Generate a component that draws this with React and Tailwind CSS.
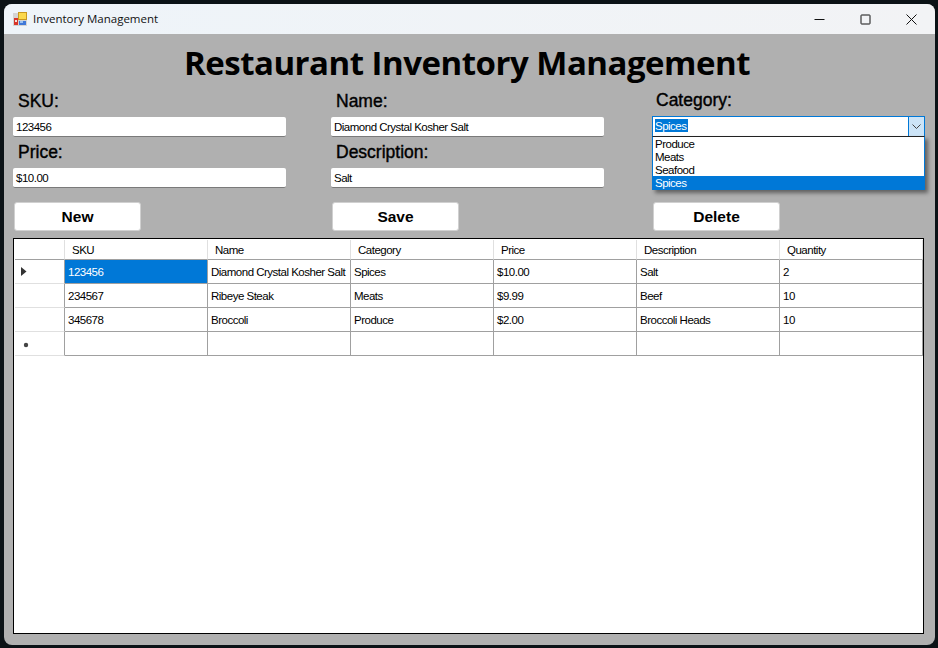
import React from 'react';

const sans = "font-['Liberation_Sans',Arial,sans-serif]";

const columns = ['SKU', 'Name', 'Category', 'Price', 'Description', 'Quantity'];

const rows = [
  ['123456', 'Diamond Crystal Kosher Salt', 'Spices', '$10.00', 'Salt', '2'],
  ['234567', 'Ribeye Steak', 'Meats', '$9.99', 'Beef', '10'],
  ['345678', 'Broccoli', 'Produce', '$2.00', 'Broccoli Heads', '10'],
  ['', '', '', '', '', ''],
];

const AppIcon = () => (
  <svg width="14" height="14" viewBox="0 0 14 14" className="shrink-0">
    <rect x="0" y="1" width="14" height="13" fill="#d4d4d4" />
    <rect x="1" y="6" width="4" height="7" fill="#d8352a" />
    <rect x="2" y="8" width="2" height="2" fill="#f6e0d8" />
    <rect x="5" y="0" width="9" height="8" fill="#c9981e" />
    <rect x="6" y="1" width="7" height="6" fill="#fbd84b" />
    <rect x="6" y="9" width="7" height="4" fill="#3f78d8" />
    <rect x="7" y="9" width="3" height="2" fill="#9cc2f2" />
  </svg>
);

const WindowButtons = () => (
  <div className="flex items-center h-full">
    <svg width="11" height="11" viewBox="0 0 11 11" className="mr-[35px]">
      <path d="M0.5 5.5H10.5" stroke="#111" strokeWidth="1" />
    </svg>
    <svg width="11" height="11" viewBox="0 0 11 11" className="mr-[35px]">
      <rect x="1" y="1" width="9" height="9" rx="0.5" fill="none" stroke="#111" strokeWidth="1" />
    </svg>
    <svg width="11" height="11" viewBox="0 0 11 11" className="mr-[18px]">
      <path d="M0.5 0.5L10.5 10.5M10.5 0.5L0.5 10.5" stroke="#111" strokeWidth="1" />
    </svg>
  </div>
);

const Field = ({ label, value }) => (
  <div className="flex flex-col">
    <div className={`h-[21px] pl-[5px] text-[17.5px] leading-[21px] text-black [-webkit-text-stroke:0.4px_#000] ${sans}`}>
      {label}
    </div>
    <div className="mt-[5px] h-[20px] w-[273px] bg-white rounded-[2px] border-b border-[#7a7a7a] pl-[3px] text-[11.5px] tracking-[-0.5px] whitespace-nowrap leading-[21px] text-black">
      {value}
    </div>
  </div>
);

const ActionButton = ({ children }) => (
  <button className={`h-[29px] w-[127px] bg-white rounded-[3px] border border-[#d0d0d0] text-[15.5px] font-bold text-black ${sans}`}>
    {children}
  </button>
);

const CategoryField = () => (
  <div className="relative flex flex-col">
    <div className={`h-[21px] pl-1 -mt-px text-[17.5px] leading-[21px] text-black [-webkit-text-stroke:0.4px_#000] ${sans}`}>
      Category:
    </div>
    <div className="mt-[5px] h-[21px] w-[273px] bg-white border border-[#0078d7] flex">
      <div className="flex-1 pl-[2px] pt-[2px]">
        <span className="block w-[33px] h-[13px] bg-[#0078d7] text-white text-[11.5px] tracking-[-0.5px] leading-[14px]">Spices</span>
      </div>
      <div className="w-[16px] bg-[#cce4f7] border-l border-[#0078d7] flex items-center justify-center">
        <svg width="9" height="5" viewBox="0 0 9 5">
          <path d="M0.5 0.5L4.5 4.5L8.5 0.5" fill="none" stroke="#444" strokeWidth="1" />
        </svg>
      </div>
    </div>
    {/* open dropdown list */}
    <div className="absolute left-0 top-[45px] z-10 w-[273px] h-[54px] bg-white border border-[#0078d7] border-t-[#222] border-b-0 shadow-[3px_3px_4px_rgba(0,0,0,0.45)] text-[11.5px] tracking-[-0.5px] text-black">
      <div className="h-[13px] leading-[15px] pl-[2px]">Produce</div>
      <div className="h-[13px] leading-[15px] pl-[2px]">Meats</div>
      <div className="h-[13px] leading-[15px] pl-[2px]">Seafood</div>
      <div className="h-[14px] leading-[15px] pl-[2px] bg-[#0078d7] text-white">Spices</div>
    </div>
  </div>
);

const DataTable = () => (
  <div className="mt-[7px] ml-[9px] w-[911px] h-[396px] border border-black bg-white pt-px pl-px">
    <div className="grid grid-cols-[50px_repeat(6,143px)] text-[11.5px] tracking-[-0.5px] text-black">
      <div className="h-[20px] border-b border-[#a0a0a0] border-r border-r-[#e0e0e0]" />
      {columns.map((c) => (
        <div key={c} className="h-[20px] border-b border-[#a0a0a0] border-r border-r-[#e0e0e0] pl-[7px] leading-[20px]">
          {c}
        </div>
      ))}
      {rows.map((row, i) => (
        <React.Fragment key={i}>
          <div className="h-[24px] border-b border-r border-[#a0a0a0] border-b-[#e0e0e0] flex items-center pl-[6px]">
            {i === 0 && (
              <svg width="6" height="9" viewBox="0 0 6 9"><path d="M0 0L5.5 4.5L0 9Z" fill="#333" /></svg>
            )}
            {i === 3 && (
              <svg width="6" height="6" viewBox="0 0 6 6" className="ml-[2px] mt-[3px]"><circle cx="3" cy="3" r="2.2" fill="#444" /></svg>
            )}
          </div>
          {row.map((cell, j) => (
            <div
              key={j}
              className={
                i === 0 && j === 0
                  ? 'h-[24px] bg-[#0078d7] text-white border-b border-r border-[#a0a0a0] pl-[3px] leading-[24px] whitespace-nowrap'
                  : 'h-[24px] border-b border-r border-[#a0a0a0] pl-[3px] leading-[24px] whitespace-nowrap'
              }
            >
              {cell}
            </div>
          ))}
        </React.Fragment>
      ))}
    </div>
  </div>
);

export default function App() {
  return (
    <div className={`w-[938px] h-[648px] bg-[#0b1216] pt-[4px] px-[4px] overflow-hidden ${sans}`}>
      <div className="w-[931px] h-[641px] rounded-[8px] overflow-hidden bg-[#b0b0b0] flex flex-col">
        {/* Title bar */}
        <div className="h-[30px] shrink-0 bg-gradient-to-r from-[#eef4f9] to-[#f2f3f5] flex items-center justify-between">
          <div className="flex items-center pl-[9px]">
            <AppIcon />
            <span className="ml-[6px] text-[11.5px] text-[#111] font-['Open_Sans',sans-serif]">Inventory Management</span>
          </div>
          <WindowButtons />
        </div>

        <h1 className="h-[50px] pr-[5px] text-center text-[33px] tracking-[-0.5px] leading-[58px] font-bold text-black font-['Open_Sans',sans-serif]">
          Restaurant Inventory Management
        </h1>

        {/* Form */}
        <div className="mt-[7px] pl-[9px] grid grid-cols-[318px_321px_273px]">
          <div className="flex flex-col gap-[5px]">
            <Field label="SKU:" value="123456" />
            <Field label="Price:" value="$10.00" />
          </div>
          <div className="flex flex-col gap-[5px]">
            <Field label="Name:" value="Diamond Crystal Kosher Salt" />
            <Field label="Description:" value="Salt" />
          </div>
          <CategoryField />
        </div>

        <div className="mt-[14px] pl-[10px] grid grid-cols-[318px_321px_273px]">
          <ActionButton>New</ActionButton>
          <ActionButton>Save</ActionButton>
          <ActionButton>Delete</ActionButton>
        </div>

        <DataTable />
      </div>
    </div>
  );
}
